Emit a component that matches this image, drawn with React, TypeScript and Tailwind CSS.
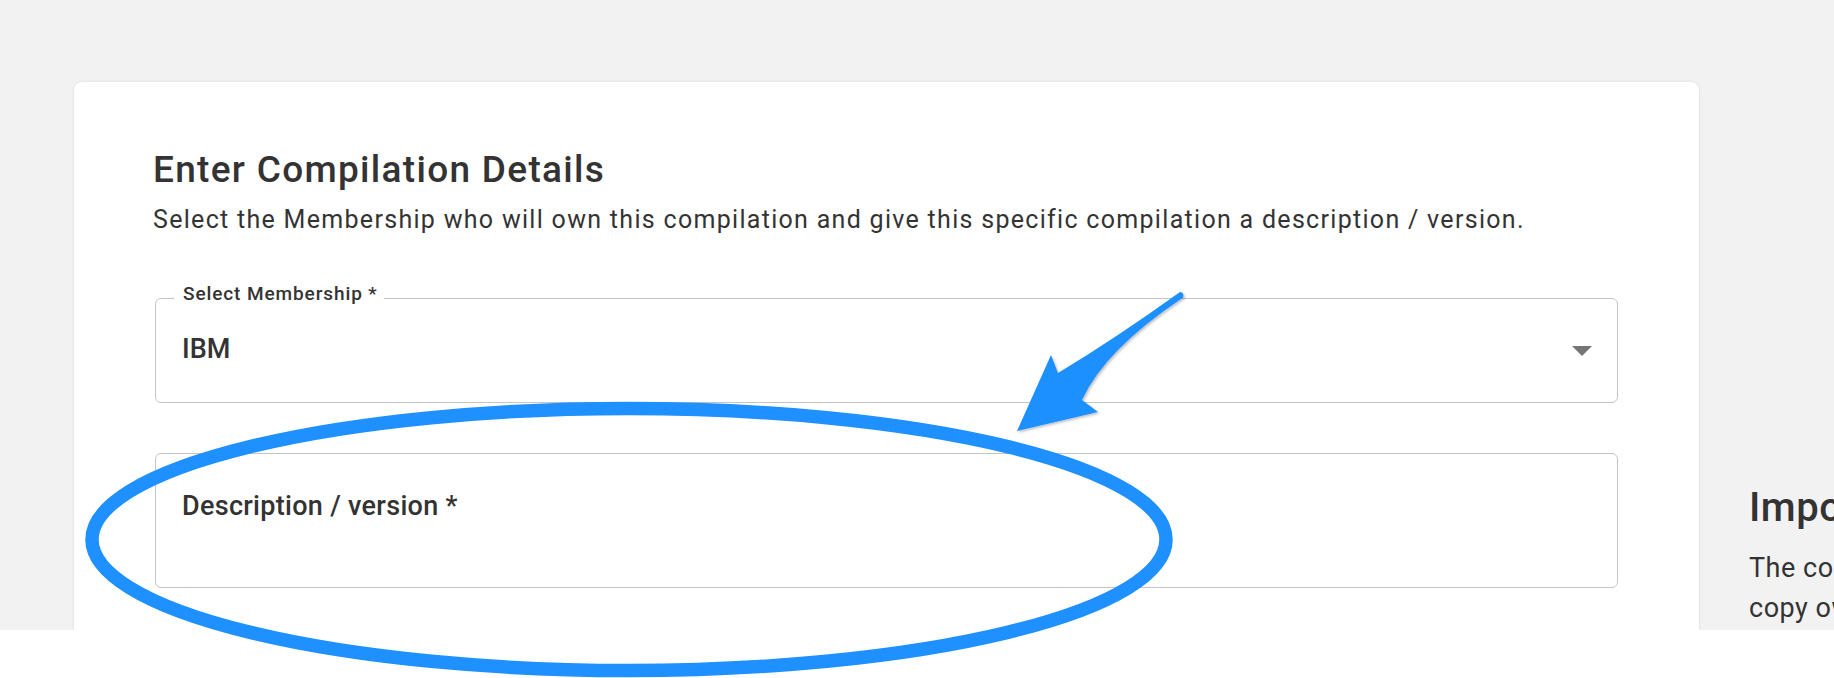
// annotation overlay: arrow + ellipse drawn on top of the form
function Annotation() {
  return (
    <svg
      className="absolute inset-0 pointer-events-none"
      width={1834}
      height={678}
      viewBox="0 0 1834 678"
    >
      <defs>
        <filter id="arrowShadow" x="-10%" y="-10%" width="130%" height="130%">
          <feDropShadow dx="1.5" dy="1.5" stdDeviation="1" floodColor="#000" floodOpacity="0.25" />
        </filter>
      </defs>
      <ellipse cx={629} cy={539.5} rx={537} ry={131} fill="none" stroke="#1e90ff" strokeWidth={13.5} />
      <path
        d="M 1180 292 Q 1116 338 1058 373 L 1051 355 L 1017 431 L 1098 412 L 1082 400 Q 1105 350 1181 299 A 3.6 3.6 0 0 0 1180 292 Z"
        fill="#1e90ff"
        filter="url(#arrowShadow)"
      />
    </svg>
  )
}

export default function App() {
  return (
    <div className="relative w-[1834px] h-[678px] overflow-hidden bg-white font-['Roboto',sans-serif] text-[#333]">
      <div className="h-[630px] overflow-hidden bg-[#f2f2f2] flex items-start gap-[50px] pl-[74px] pt-[82px]">
        {/* Form card */}
        <div className="w-[1625px] h-[700px] shrink-0 bg-white rounded-[8px] shadow-[0_0_3px_rgba(0,0,0,0.1)] px-[81px] pt-[66px]">
          <h2 className="-ml-[2px] text-[37px] leading-[44px] font-medium tracking-[1.3px]">Enter Compilation Details</h2>
          <p className="-ml-[2px] mt-[10px] text-[25px] leading-[36px] tracking-[1.3px]">
            Select the Membership who will own this compilation and give this specific compilation a description / version.
          </p>

          <div className="relative mt-[60px] h-[105px] rounded-[6px] border-[1.5px] border-[#c4c4c4] flex items-center justify-between pl-[26px] pr-[25px] pb-[4px]">
            <span className="absolute left-[18px] top-[-17px] bg-white pl-[9px] pr-[6px] text-[19px] leading-[24px] font-medium tracking-[0.9px]">
              Select Membership *
            </span>
            <span className="text-[27px] leading-[32px] font-medium">IBM</span>
            <svg width="20" height="10" viewBox="0 0 20 10" className="mt-[4px]">
              <path d="M0 0 L20 0 L10 10 Z" fill="#757575" />
            </svg>
          </div>

          <div className="mt-[50px] h-[135px] rounded-[6px] border-[1.5px] border-[#c4c4c4] pl-[26px] pt-[36px]">
            <span className="text-[27px] leading-[32px] font-medium tracking-[0.3px]">Description / version *</span>
          </div>
        </div>

        {/* Side note */}
        <div className="w-[440px] shrink-0 mt-[402px]">
          <h3 className="text-[40px] leading-[48px] font-medium whitespace-nowrap tracking-[0.5px]">Important information</h3>
          <p className="mt-[16px] text-[27px] leading-[40px] whitespace-nowrap tracking-[0.5px]">
            The compilation will be a
            <br />
            copy owned by the membership.
          </p>
        </div>
      </div>
      <Annotation />
    </div>
  )
}
